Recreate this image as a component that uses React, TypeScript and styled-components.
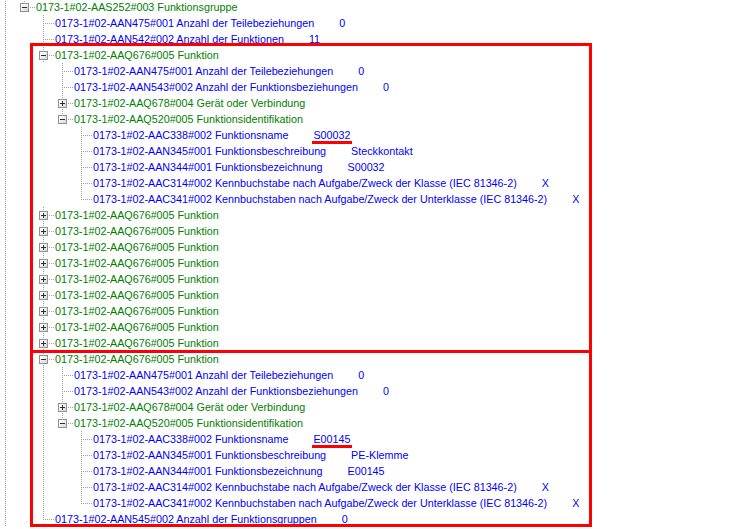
import React from "react";
import styled, { createGlobalStyle, css } from "styled-components";

const GlobalStyle = createGlobalStyle`
  html, body {
    margin: 0;
    padding: 0;
    background: #ffffff;
  }
  body {
    font-family: "Liberation Sans", Arial, sans-serif;
    font-size: 10.75px;
  }
`;

const LINE = "#a0a0a0";
const dotsDown = `repeating-linear-gradient(to bottom, ${LINE} 0 1px, transparent 1px 2px)`;
const dotsRight = `repeating-linear-gradient(to right, ${LINE} 0 1px, transparent 1px 2px)`;

type TreeNode = {
  text: string;
  value?: string;
  kind: "group" | "prop";
  open?: boolean; // undefined = no expander
  marked?: boolean;
  hideGuide?: boolean;
  children?: TreeNode[];
};

type FlatRow = {
  node: TreeNode;
  guides: boolean[];
  last: boolean;
};

const Page = styled.div`
  position: relative;
  width: 750px;
  height: 529px;
  overflow: hidden;
  background: #ffffff;
`;

const Tree = styled.div`
  display: flex;
  flex-direction: column;
  margin-top: -1px;
`;

const Row = styled.div`
  display: flex;
  align-items: center;
  height: 16px;
  line-height: 16px;
  white-space: nowrap;
`;

const Guide = styled.span<{ $through: boolean }>`
  flex: none;
  width: 19px;
  height: 16px;
  ${(p) =>
    p.$through &&
    css`
      background-image: ${dotsDown};
      background-size: 1px 100%;
      background-position: 5px 0;
      background-repeat: no-repeat;
    `}
`;

const Connector = styled.span<{ $last: boolean }>`
  position: relative;
  flex: none;
  width: 17px;
  height: 16px;
  background-image: ${dotsDown}, ${dotsRight};
  background-size: 1px ${(p) => (p.$last ? "8px" : "16px")}, 11px 1px;
  background-position: 5px 0, 5px 8px;
  background-repeat: no-repeat;
`;

const Expander = styled.span<{ $open: boolean }>`
  position: absolute;
  left: 1px;
  top: 4px;
  width: 9px;
  height: 9px;
  box-sizing: border-box;
  border: 1px solid #919191;
  background: linear-gradient(135deg, #ffffff 20%, #d4d4d4 100%);

  &::before {
    content: "";
    position: absolute;
    left: 1px;
    top: 3px;
    width: 5px;
    height: 1px;
    background: #2b2b3b;
  }

  ${(p) =>
    !p.$open &&
    css`
      &::after {
        content: "";
        position: absolute;
        left: 3px;
        top: 1px;
        width: 1px;
        height: 5px;
        background: #2b2b3b;
      }
    `}
`;

const Label = styled.span<{ $kind: "group" | "prop" }>`
  color: ${(p) => (p.$kind === "group" ? "#008000" : "#0000ff")};
`;

const Value = styled.span<{ $marked?: boolean }>`
  position: relative;
  margin-left: 25px;
  color: #0000ff;

  ${(p) =>
    p.$marked &&
    css`
      &::after {
        content: "";
        position: absolute;
        left: -1px;
        right: -1px;
        top: 14px;
        height: 3px;
        background: #ff0000;
      }
    `}
`;

const Highlight = styled.div<{ $top: number; $height: number }>`
  position: absolute;
  left: 30px;
  width: 562px;
  top: ${(p) => p.$top}px;
  height: ${(p) => p.$height}px;
  box-sizing: border-box;
  border: 3px solid #ff0000;
  pointer-events: none;
`;

const prop = (text: string, value?: string, marked?: boolean): TreeNode => ({
  kind: "prop",
  text,
  value,
  marked,
});

const funktion = (name: string, desc: string, hideGuide?: boolean): TreeNode => ({
  kind: "group",
  text: "0173-1#02-AAQ676#005 Funktion",
  open: true,
  hideGuide,
  children: [
    prop("0173-1#02-AAN475#001 Anzahl der Teilebeziehungen", "0"),
    prop("0173-1#02-AAN543#002 Anzahl der Funktionsbeziehungen", "0"),
    { kind: "group", text: "0173-1#02-AAQ678#004 Gerät oder Verbindung", open: false },
    {
      kind: "group",
      text: "0173-1#02-AAQ520#005 Funktionsidentifikation",
      open: true,
      children: [
        prop("0173-1#02-AAC338#002 Funktionsname", name, true),
        prop("0173-1#02-AAN345#001 Funktionsbeschreibung", desc),
        prop("0173-1#02-AAN344#001 Funktionsbezeichnung", name),
        prop("0173-1#02-AAC314#002 Kennbuchstabe nach Aufgabe/Zweck der Klasse (IEC 81346-2)", "X"),
        prop("0173-1#02-AAC341#002 Kennbuchstaben nach Aufgabe/Zweck der Unterklasse (IEC 81346-2)", "X"),
      ],
    },
  ],
});

const closedFunktion = (): TreeNode => ({
  kind: "group",
  text: "0173-1#02-AAQ676#005 Funktion",
  open: false,
});

const data: TreeNode = {
  kind: "group",
  text: "0173-1#02-AAS252#003 Funktionsgruppe",
  open: true,
  children: [
    prop("0173-1#02-AAN475#001 Anzahl der Teilebeziehungen", "0"),
    prop("0173-1#02-AAN542#002 Anzahl der Funktionen", "11"),
    funktion("S00032", "Steckkontakt", true),
    ...Array.from({ length: 9 }, closedFunktion),
    funktion("E00145", "PE-Klemme"),
    prop("0173-1#02-AAN545#002 Anzahl der Funktionsgruppen", "0"),
  ],
};

function flatten(node: TreeNode, guides: boolean[], last: boolean, out: FlatRow[]) {
  out.push({ node, guides, last });
  if (node.open && node.children) {
    const childGuides = [...guides, !last && !node.hideGuide];
    node.children.forEach((child, i) => {
      flatten(child, childGuides, i === node.children!.length - 1, out);
    });
  }
  return out;
}

// column 0 belongs to an ancestor above the visible area, which keeps going
const rows = flatten(data, [true], true, []);

export default function App() {
  return (
    <>
      <GlobalStyle />
      <Page>
        <Tree>
          {rows.map((r, i) => (
            <Row key={i}>
              {r.guides.map((g, j) => (
                <Guide key={j} $through={g} />
              ))}
              <Connector $last={r.last}>
                {r.node.open !== undefined && <Expander $open={r.node.open} />}
              </Connector>
              <Label $kind={r.node.kind}>{r.node.text}</Label>
              {r.node.value && <Value $marked={r.node.marked}>{r.node.value}</Value>}
            </Row>
          ))}
        </Tree>
        <Highlight $top={43} $height={310} />
        <Highlight $top={350} $height={177} />
      </Page>
    </>
  );
}
